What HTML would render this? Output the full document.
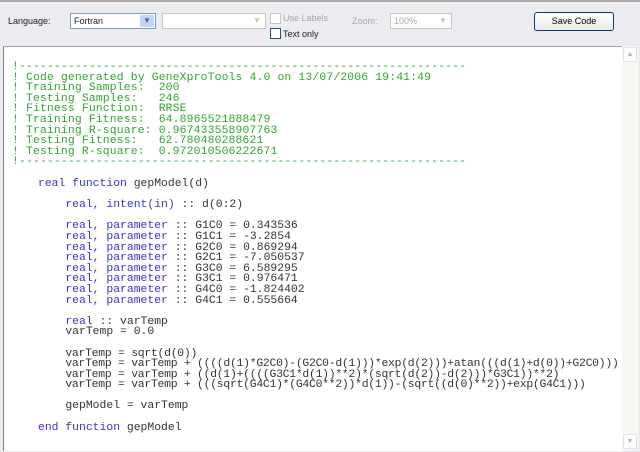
<!DOCTYPE html>
<html><head><style>
body{margin:0;width:640px;height:452px;background:#ecebf0;font-family:"Liberation Sans",sans-serif;position:relative;overflow:hidden}
.t{position:absolute;font-size:9px;color:#222}
.cb{position:absolute;height:16px;background:#fff;border:1px solid #7f9db9;box-sizing:border-box}
.arr{position:absolute;right:1px;top:1px;width:14px;height:12px;background:#c1d3fb;border-radius:2px;font-size:8px;color:#4d6185;text-align:center;line-height:12px}
.chk{position:absolute;width:11px;height:11px;border:1px solid #1c5180;background:#fff;box-sizing:border-box}
#code{position:absolute;left:3px;top:46px;width:620px;height:404px;background:#fff;border-left:1px solid #808080;border-top:1px solid #a0a0a0;overflow:hidden}
pre{margin:0;position:absolute;font-family:"Liberation Mono",monospace;font-size:11.4px;line-height:10.6px;color:#333;white-space:pre}
.g{color:#2fa52f;letter-spacing:0.15px}.b{color:#3535d0}
.n{letter-spacing:-0.25px}
#sb{position:absolute;left:622px;top:46px;width:16px;height:404px;background:#f7f7f3}
</style></head><body>
<div style="position:absolute;left:0;top:0;width:640px;height:2px;background:#a8a8a8"></div>
<div class="t" style="left:8px;top:16px">Language:</div>
<div class="cb" style="left:70px;top:13px;width:86px"><span class="t" style="left:3px;top:2px">Fortran</span><div class="arr">&#9660;</div></div>
<div class="cb" style="left:162px;top:13px;width:104px;border-color:#c9c7ba"><div class="arr" style="background:#fff;color:#c9c7ba">&#9660;</div></div>
<div class="chk" style="left:270px;top:13px;border-color:#c9c7ba"></div>
<div class="t" style="left:283px;top:13px;color:#a8a8a8">Use Labels</div>
<div class="chk" style="left:270px;top:28px"></div>
<div class="t" style="left:283px;top:29px">Text only</div>
<div class="t" style="left:352px;top:16px;color:#a8a8a8">Zoom:</div>
<div class="cb" style="left:390px;top:13px;width:62px;border-color:#c9c7ba"><span class="t" style="left:3px;top:2px;color:#a8a8a8">100%</span><div class="arr" style="background:#fff;color:#c9c7ba">&#9660;</div></div>
<div style="position:absolute;left:534px;top:12px;width:80px;height:19px;border:1px solid #003c74;border-radius:3px;background:linear-gradient(#fff,#ecebe6);box-sizing:border-box;font-size:9px;text-align:center;line-height:17px">Save Code</div>
<div id="code">
<pre class="g" style="left:8px;top:15px">!----------------------------------------------------------------
! Code generated by GeneXproTools 4.0 on 13/07/2006 19:41:49
! Training Samples:  200
! Testing Samples:   246
! Fitness Function:  RRSE
! Training Fitness:  64.8965521888479
! Training R-square: 0.967433558907763
! Testing Fitness:   62.780480288621
! Testing R-square:  0.972010506222671
!----------------------------------------------------------------</pre>
<pre style="left:34px;top:132px"><span class="b">real function</span> gepModel(d)

    <span class="b">real, intent(in)</span> :: d(0:2)

    <span class="b">real, parameter</span> :: G1C0 = 0.343536
    <span class="b">real, parameter</span> :: G1C1 = -3.2854
    <span class="b">real, parameter</span> :: G2C0 = 0.869294
    <span class="b">real, parameter</span> :: G2C1 = -7.050537
    <span class="b">real, parameter</span> :: G3C0 = 6.589295
    <span class="b">real, parameter</span> :: G3C1 = 0.976471
    <span class="b">real, parameter</span> :: G4C0 = -1.824402
    <span class="b">real, parameter</span> :: G4C1 = 0.555664

    <span class="b">real</span> :: varTemp
    varTemp = 0.0

    <span class="n">varTemp = sqrt(d(0))</span>
    <span class="n">varTemp = varTemp + ((((d(1)*G2C0)-(G2C0-d(1)))*exp(d(2)))+atan(((d(1)+d(0))+G2C0)))</span>
    <span class="n">varTemp = varTemp + ((d(1)+((((G3C1*d(1))**2)*(sqrt(d(2))-d(2)))*G3C1))**2)</span>
    <span class="n">varTemp = varTemp + (((sqrt(G4C1)*(G4C0**2))*d(1))-(sqrt((d(0)**2))+exp(G4C1)))</span>

    gepModel = varTemp

<span class="b">end function</span> gepModel</pre>
</div>
<div id="sb">
<div style="position:absolute;left:1px;top:1px;width:14px;height:15px;background:#fdfdfb;border:1px solid #e4e4dc;box-sizing:border-box;font-size:7px;color:#b0b0b0;text-align:center;line-height:14px">&#9650;</div>
<div style="position:absolute;left:1px;bottom:1px;width:14px;height:15px;background:#fdfdfb;border:1px solid #e4e4dc;box-sizing:border-box;font-size:7px;color:#b0b0b0;text-align:center;line-height:14px">&#9660;</div>
</div>
</body></html>
